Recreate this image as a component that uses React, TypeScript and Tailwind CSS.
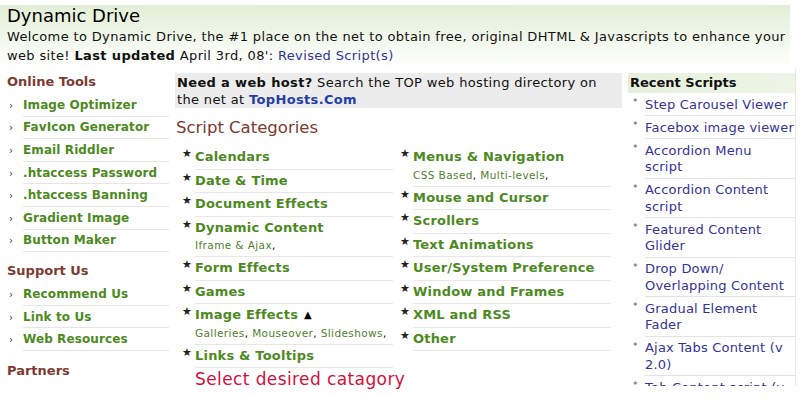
import React from "react";

const font = { fontFamily: '"DejaVu Sans", Verdana, sans-serif' };

const tools = ["Image Optimizer", "FavIcon Generator", "Email Riddler", ".htaccess Password", ".htaccess Banning", "Gradient Image", "Button Maker"];
const support = ["Recommend Us", "Link to Us", "Web Resources"];

type C = { t: string; sub?: string[]; up?: boolean };

const leftCats: C[] = [
  { t: "Calendars" },
  { t: "Date & Time" },
  { t: "Document Effects" },
  { t: "Dynamic Content", sub: ["Iframe & Ajax"] },
  { t: "Form Effects" },
  { t: "Games" },
  { t: "Image Effects", sub: ["Galleries", "Mouseover", "Slideshows"], up: true },
  { t: "Links & Tooltips" },
];
const rightCats: C[] = [
  { t: "Menus & Navigation", sub: ["CSS Based", "Multi-levels"] },
  { t: "Mouse and Cursor" },
  { t: "Scrollers" },
  { t: "Text Animations" },
  { t: "User/System Preference" },
  { t: "Window and Frames" },
  { t: "XML and RSS" },
  { t: "Other" },
];

const recent: string[][] = [
  ["Step Carousel Viewer"],
  ["Facebox image viewer"],
  ["Accordion Menu", "script"],
  ["Accordion Content", "script"],
  ["Featured Content", "Glider"],
  ["Drop Down/", "Overlapping Content"],
  ["Gradual Element", "Fader"],
  ["Ajax Tabs Content (v", "2.0)"],
  ["Tab Content script (v", "2.2)"],
];

function ToolItem({ t }: { t: string }) {
  return (
    <div className="flex h-[22.6px] items-center">
      <span className="w-[16px] pl-[2px] text-[10px] text-[#333]">›</span>
      <div className="flex h-full flex-1 items-center border-b border-[#e6e6e6] text-[12px] font-bold tracking-[0.1px] text-[#4c8a1e]">{t}</div>
    </div>
  );
}

function Cat({ c }: { c: C }) {
  return (
    <div className="flex w-[213px]">
      <span className="w-[15px] pl-[2px] pt-[1px] text-[11px] leading-[14px] text-[#222]">★</span>
      <div className={`flex-1 border-b border-[#e8e8e8] ${c.sub ? "pb-[3px]" : "pb-[1px]"}`}>
        <div className="flex h-[21.5px] items-center text-[13px] font-bold tracking-[0.2px] text-[#4c8a1e]">
          {c.t}
          {c.up && <span className="ml-[6px] text-[10px] text-black">▲</span>}
        </div>
        {c.sub && (
          <div className="-mt-[1px] text-[10.5px] leading-[16px] tracking-[0.4px] text-[#4f7f2e]">
            {c.sub.map((s, i) => (
              <span key={s}>
                {s}
                <span className="text-black">,</span>
                {i < c.sub!.length - 1 ? " " : ""}
              </span>
            ))}
          </div>
        )}
      </div>
    </div>
  );
}

export default function App() {
  return (
    <div className="h-[397px] w-[800px] overflow-hidden bg-white" style={font}>
      <div className="mt-[5px] h-[63px] w-[790px] bg-gradient-to-b from-[#e2efd6] to-white pl-[7px]">
        <div className="text-[18px] leading-[22px] text-black">Dynamic Drive</div>
        <div className="w-[788px] text-[13px] leading-[19px] tracking-[0.36px] text-[#111]">
          Welcome to Dynamic Drive, the #1 place on the net to obtain free, original DHTML &amp; Javascripts to enhance your
          <br />
          web site! <b>Last updated</b> April 3rd, 08': <span className="text-[#333399]">Revised Script(s)</span>
        </div>
      </div>

      <div className="flex items-start">
        <div className="w-[175px] pl-[7px] pr-[6px] pt-[4px]">
          <div className="mb-[2px] text-[13px] font-bold leading-[20px] text-[#7d3b2f]">Online Tools</div>
          {tools.map((t) => (
            <ToolItem key={t} t={t} />
          ))}
          <div className="mb-[2px] mt-[9px] text-[13px] font-bold leading-[20px] text-[#7d3b2f]">Support Us</div>
          {support.map((t) => (
            <ToolItem key={t} t={t} />
          ))}
          <div className="mt-[10px] text-[13px] font-bold leading-[20px] text-[#7d3b2f]">Partners</div>
        </div>

        <div className="w-[453px]">
          <div className="mt-[5px] h-[35px] w-[447px] bg-[#ececec] px-[2px] pt-[1px] text-[13px] leading-[17px] tracking-[0.35px] text-[#111]">
            <b>Need a web host?</b> Search the TOP web hosting directory on
            <br />
            the net at <b className="text-[#1f3fa8]">TopHosts.Com</b>
          </div>
          <div className="mt-[10px] pl-[1px] text-[16.5px] leading-[20px] text-[#7d3b2f]">Script Categories</div>
          <div className="mt-[8px] flex pl-[5px]">
            <div className="w-[218px]">
              {leftCats.map((c) => (
                <Cat key={c.t} c={c} />
              ))}
            </div>
            <div className="w-[218px]">
              {rightCats.map((c) => (
                <Cat key={c.t} c={c} />
              ))}
            </div>
          </div>
          <div className="pl-[20px] text-[17px] leading-[22px] tracking-[0.4px] text-[#d4103c]">Select desired catagory</div>
        </div>

        <div className="h-[318px] w-[168px] overflow-hidden border-r border-[#e4eedc] pt-[5px]">
          <div className="h-[20px] bg-gradient-to-r from-[#e6efdc] to-[#eef5e8] pl-[2px] text-[13px] font-bold leading-[20px] text-[#111]">
            Recent Scripts
          </div>
          {recent.map((r) => (
            <div key={r[0]} className="flex">
              <span className="w-[17px] pl-[5px] pt-[1px] text-[9px] leading-[17px] text-[#555]">*</span>
              <div className="flex-1 whitespace-nowrap border-b border-[#e4e4e4] pb-[2px] pt-[3.5px] text-[13px] leading-[16.5px] tracking-[0.2px] text-[#333399]">
                {r.map((l, i) => (
                  <div key={i}>{l}</div>
                ))}
              </div>
            </div>
          ))}
        </div>
      </div>
    </div>
  );
}
